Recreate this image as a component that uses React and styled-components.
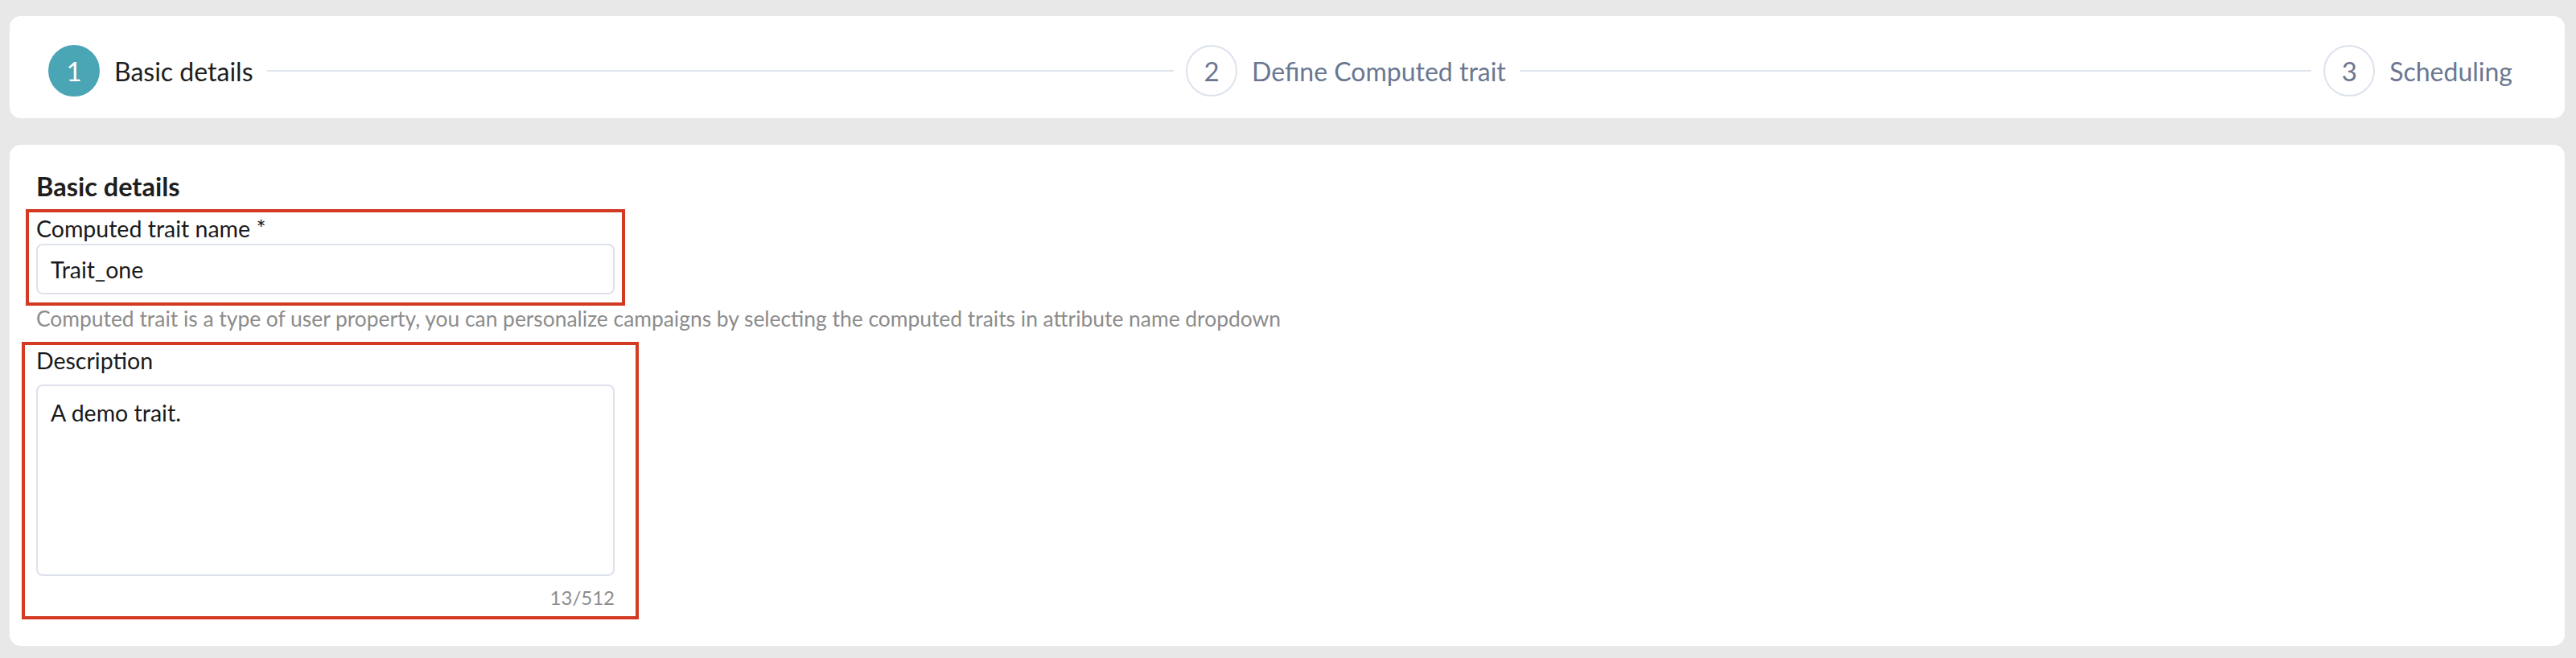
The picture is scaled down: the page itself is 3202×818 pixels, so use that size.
import React from 'react';
import styled, { createGlobalStyle } from 'styled-components';

const GlobalStyle = createGlobalStyle`
  html, body {
    margin: 0;
    padding: 0;
    background: #e8e8e8;
    font-family: Lato, "Open Sans", sans-serif;
  }
  * { box-sizing: border-box; }
`;

const Page = styled.div`
  display: flex;
  flex-direction: column;
  gap: 33px;
  padding: 20px 14px 16px 12px;
`;

const Card = styled.div`
  background: #fff;
  border-radius: 14px;
`;

/* ---------- stepper ---------- */

const StepperCard = styled(Card)`
  display: flex;
  align-items: center;
  padding: 36px 65px 27px 48px;
`;

const Step = styled.div`
  display: flex;
  align-items: center;
  flex: ${(p) => (p.last ? '0 0 auto' : '1 1 0')};
  min-width: 0;
`;

const StepCircle = styled.div`
  flex: 0 0 64px;
  width: 64px;
  height: 64px;
  border-radius: 50%;
  display: flex;
  align-items: center;
  justify-content: center;
  font-size: 33px;
  background: ${(p) => (p.active ? '#4aa5b5' : '#fff')};
  border: 2px solid ${(p) => (p.active ? '#4aa5b5' : '#dde2ec')};
  color: ${(p) => (p.active ? '#fff' : '#6b7791')};
`;

const StepLabel = styled.span`
  margin-left: 18px;
  font-size: 32px;
  white-space: nowrap;
  color: ${(p) => (p.active ? '#1e1e1e' : '#6b7791')};
`;

const StepLine = styled.div`
  flex: 1;
  height: 2px;
  margin: 0 15px 0 17px;
  background: #dfe3ec;
`;

/* ---------- form ---------- */

const FormCard = styled(Card)`
  display: flex;
  flex-direction: column;
  align-items: flex-start;
  padding: 36px 33px 33px 33px;
`;

const SectionTitle = styled.h2`
  margin: 0 0 12px 0;
  font-size: 32.5px;
  line-height: 32px;
  font-weight: 700;
  color: #1e1e1e;
`;

const Highlight = styled.div`
  border: 4px solid #d23a22;
  margin-left: -${(p) => p.left + 4}px;
  padding: ${(p) => p.top}px ${(p) => p.right}px ${(p) => p.bottom}px ${(p) => p.left}px;
`;

const Field = styled.div`
  display: flex;
  flex-direction: column;
  width: 719px;
`;

const Label = styled.label`
  font-size: 28.5px;
  line-height: 32px;
  color: #1a1a1a;
  margin-bottom: ${(p) => p.gap}px;
`;

const TextInput = styled.input`
  height: 63px;
  width: 100%;
  padding: 0 16px;
  border: 2px solid #dde1ec;
  border-radius: 8px;
  font-family: inherit;
  font-size: 28.5px;
  color: #1a1a1a;
  outline: none;
`;

const TextArea = styled.textarea`
  height: 238px;
  width: 100%;
  padding: 16px 16px;
  border: 2px solid #dde1ec;
  border-radius: 8px;
  font-family: inherit;
  font-size: 28.5px;
  line-height: 34px;
  color: #1a1a1a;
  resize: none;
  outline: none;
`;

const Hint = styled.p`
  margin: 1px 0 14px 0;
  font-size: 26.4px;
  line-height: 30px;
  color: #8c8c8c;
  white-space: nowrap;
`;

const Counter = styled.span`
  align-self: flex-end;
  margin-top: 13px;
  font-size: 24px;
  line-height: 28px;
  color: #8c8c8c;
`;

const steps = ['Basic details', 'Define Computed trait', 'Scheduling'];

export default function App() {
  const description = 'A demo trait.';

  return (
    <>
      <GlobalStyle />
      <Page>
        <StepperCard>
          {steps.map((title, i) => {
            const last = i === steps.length - 1;
            return (
              <Step key={title} last={last}>
                <StepCircle active={i === 0}>{i + 1}</StepCircle>
                <StepLabel active={i === 0}>{title}</StepLabel>
                {!last && <StepLine />}
              </Step>
            );
          })}
        </StepperCard>

        <FormCard>
          <SectionTitle>Basic details</SectionTitle>

          <Highlight left={9} right={9} top={4} bottom={10}>
            <Field>
              <Label gap={3}>Computed trait name *</Label>
              <TextInput defaultValue="Trait_one" readOnly />
            </Field>
          </Highlight>
          <Hint>
            Computed trait is a type of user property, you can personalize campaigns by selecting the computed traits in attribute name dropdown
          </Hint>

          <Highlight left={14} right={26} top={3} bottom={9}>
            <Field>
              <Label gap={14}>Description</Label>
              <TextArea defaultValue={description} readOnly />
              <Counter>{description.length}/512</Counter>
            </Field>
          </Highlight>
        </FormCard>
      </Page>
    </>
  );
}
